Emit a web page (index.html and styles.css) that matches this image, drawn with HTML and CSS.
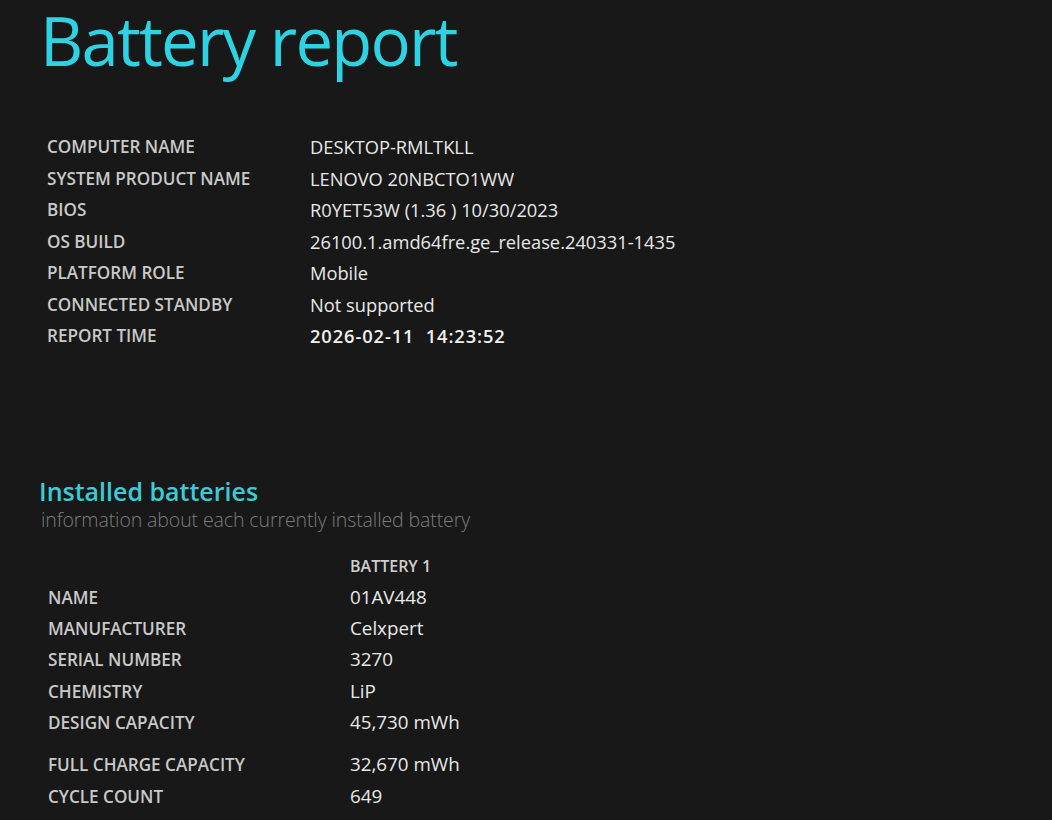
FILE: index.html
```html
<!DOCTYPE html>
<html>
<head>
<meta charset="utf-8">
<link rel="stylesheet" href="styles.css">
</head>
<body>
<h1 class="title">Battery report</h1>
<div class="info">
  <div class="label">COMPUTER NAME</div><div class="value">DESKTOP-RMLTKLL</div>
  <div class="label">SYSTEM PRODUCT NAME</div><div class="value">LENOVO 20NBCTO1WW</div>
  <div class="label">BIOS</div><div class="value">R0YET53W (1.36 ) 10/30/2023</div>
  <div class="label">OS BUILD</div><div class="value">26100.1.amd64fre.ge_release.240331-1435</div>
  <div class="label">PLATFORM ROLE</div><div class="value">Mobile</div>
  <div class="label">CONNECTED STANDBY</div><div class="value">Not supported</div>
  <div class="label">REPORT TIME</div><div class="value strong">2026-02-11&nbsp;&nbsp;14:23:52</div>
</div>
<h2 class="section">Installed batteries</h2>
<div class="subtitle">information about each currently installed battery</div>
<div class="batt">
  <div class="label"></div><div class="head">BATTERY 1</div>
  <div class="label">NAME</div><div class="value">01AV448</div>
  <div class="label">MANUFACTURER</div><div class="value">Celxpert</div>
  <div class="label">SERIAL NUMBER</div><div class="value">3270</div>
  <div class="label">CHEMISTRY</div><div class="value">LiP</div>
  <div class="label">DESIGN CAPACITY</div><div class="value">45,730 mWh</div>
  <div class="label spaced">FULL CHARGE CAPACITY</div><div class="value spaced">32,670 mWh</div>
  <div class="label">CYCLE COUNT</div><div class="value">649</div>
</div>
</body>
</html>
```
FILE: styles.css
```css
html, body {
  margin: 0;
  padding: 0;
  background: #181818;
  height: 100%;
  overflow: hidden;
}
body {
  font-family: "Open Sans", "Noto Sans", sans-serif;
  color: #e6e6e6;
}
.title {
  margin: 0;
  padding: 0 0 0 40px;
  font-weight: 400;
  font-size: 67px;
  line-height: 80px;
  color: #2ed3e3;
  letter-spacing: -1.8px;
}
.info {
  display: grid;
  grid-template-columns: 263px auto;
  grid-auto-rows: 31.5px;
  align-items: center;
  margin: 51px 0 0 47px;
}
.label {
  font-size: 17.1px;
  font-weight: 600;
  color: #c9c9c9;
}
.value {
  font-size: 18.3px;
  color: #e8e8e8;
}
.value.strong {
  font-weight: 600;
  color: #f0f0f0;
  letter-spacing: 0.9px;
}
.section {
  margin: 124px 0 0 39px;
  font-size: 25px;
  font-weight: 600;
  color: #3ccbd6;
  line-height: 30px;
}
.subtitle {
  margin: -1px 0 0 41px;
  font-size: 19.5px;
  font-weight: 300;
  color: #7c7c7c;
  line-height: 30px;
  letter-spacing: -0.1px;
}
.batt {
  display: grid;
  grid-template-columns: 302px auto;
  align-items: center;
  margin: 16px 0 0 48px;
}
.batt > div {
  line-height: 31.3px;
  height: 31.3px;
}
.batt > .spaced {
  height: auto;
  padding-top: 11px;
}
.batt .value {
  font-size: 18.8px;
}
.head {
  font-size: 16px;
  font-weight: 600;
  color: #cfcfcf;
}
```
